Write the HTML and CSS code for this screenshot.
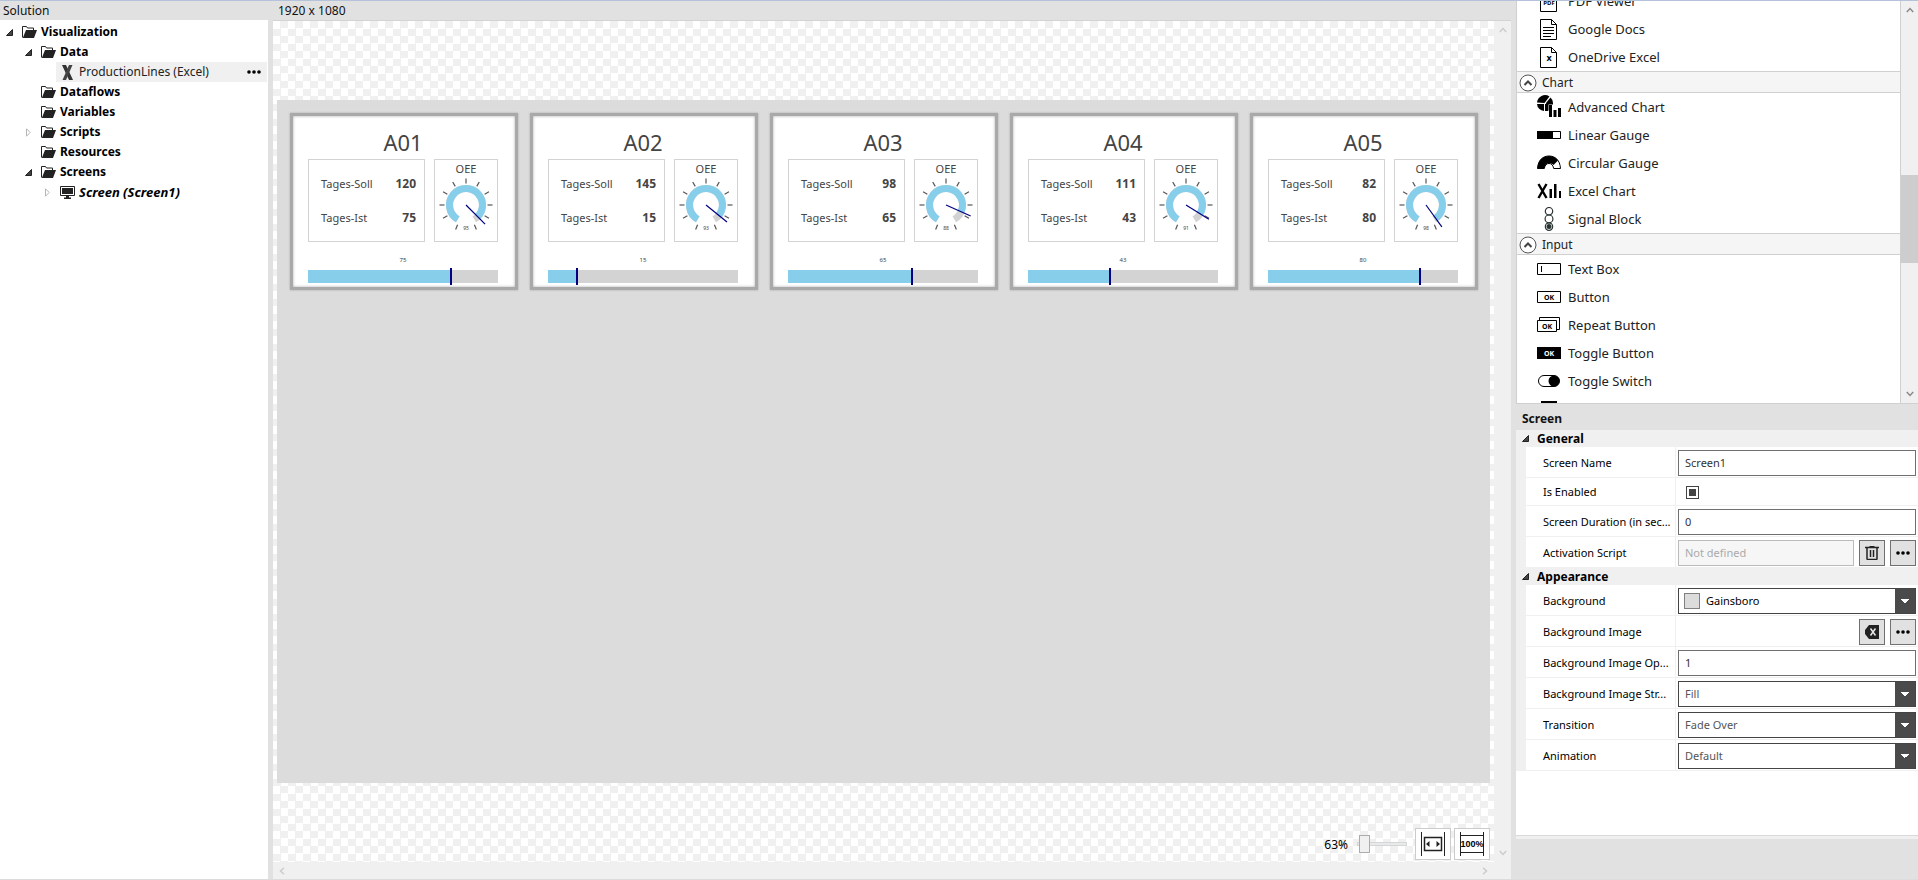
FILE: index.html
```html
<!DOCTYPE html>
<html lang="en">
<head>
<meta charset="utf-8">
<title>Visualization Designer</title>
<link rel="stylesheet" href="styles.css">
</head>
<body>
<svg class="defs" aria-hidden="true">
  <symbol id="folder" viewBox="0 0 15 13">
    <path d="M.5 11.500V.5h4l1 1.500h6V4" fill="none" stroke="#222"/>
    <path d="M4 4h11l-3 8H.8z" fill="#222"/>
  </symbol>
  <symbol id="open" viewBox="0 0 7 7"><path d="M6.500.5v6h-6z" fill="#444" stroke="#222"/></symbol>
  <symbol id="closed" viewBox="0 0 5 9"><path d="M.5.8v7.400l3.700-3.700z" fill="#fff" stroke="#b5b5b5"/></symbol>
  <symbol id="dots" viewBox="0 0 14 4"><circle cx="2" cy="2" r="1.800"/><circle cx="7" cy="2" r="1.800"/><circle cx="12" cy="2" r="1.800"/></symbol>
  <symbol id="up" viewBox="0 0 8 6"><path d="M.8 5L4 1.500 7.200 5" fill="none" stroke="currentColor" stroke-width="1.500"/></symbol>
  <symbol id="collapse" viewBox="0 0 18 18"><circle cx="9" cy="9" r="8" fill="#fff" stroke="#555"/><path d="M5.500 11L9 7.500l3.500 3.500" fill="none" stroke="#444" stroke-width="2"/></symbol>
  <symbol id="page" viewBox="0 0 17 21"><path d="M.5.5h11l5 5v15H.5zM11.500.5v5h5" fill="#fff" stroke="#000"/></symbol>
  <symbol id="dial" viewBox="-27 -27 54 56">
    <path d="M-8.250 14.290A16.500 16.500 0 1 1 8.250 14.290" fill="none" stroke="#d3d3d3" stroke-width="7"/>
    <g stroke="#555" stroke-width="1.200">
      <path id="t" d="M0-26.500v5"/>
      <use href="#t" transform="rotate(30)"/><use href="#t" transform="rotate(60)"/><use href="#t" transform="rotate(90)"/><use href="#t" transform="rotate(120)"/><use href="#t" transform="rotate(157)"/>
      <use href="#t" transform="rotate(-30)"/><use href="#t" transform="rotate(-60)"/><use href="#t" transform="rotate(-90)"/><use href="#t" transform="rotate(-120)"/><use href="#t" transform="rotate(-157)"/>
    </g>
  </symbol>
</svg>

<div class="app">
  <nav class="solution">
    <h2 class="bar">Solution</h2>
    <ul class="tree">
      <li class="node l0"><svg class="tw" width="7" height="7"><use href="#open"/></svg><svg width="15" height="13"><use href="#folder"/></svg><span>Visualization</span></li>
      <li class="node l1"><svg class="tw" width="7" height="7"><use href="#open"/></svg><svg width="15" height="13"><use href="#folder"/></svg><span>Data</span></li>
      <li class="node l2 selected"><span class="pick"><svg width="11" height="15" viewBox="0 0 11 15"><path d="M0 0h4l7 15H7z" fill="#333"/><path d="M10.500 0H7L.5 15H4z" fill="#444"/></svg><span>ProductionLines (Excel)</span><button class="more" type="button" aria-label="More"><svg width="14" height="4"><use href="#dots"/></svg></button></span></li>
      <li class="node l1"><i class="tw"></i><svg width="15" height="13"><use href="#folder"/></svg><span>Dataflows</span></li>
      <li class="node l1"><i class="tw"></i><svg width="15" height="13"><use href="#folder"/></svg><span>Variables</span></li>
      <li class="node l1"><svg class="tw" width="7" height="9"><use href="#closed"/></svg><svg width="15" height="13"><use href="#folder"/></svg><span>Scripts</span></li>
      <li class="node l1"><i class="tw"></i><svg width="15" height="13"><use href="#folder"/></svg><span>Resources</span></li>
      <li class="node l1"><svg class="tw" width="7" height="7"><use href="#open"/></svg><svg width="15" height="13"><use href="#folder"/></svg><span>Screens</span></li>
      <li class="node l2 screen"><svg class="tw" width="7" height="9"><use href="#closed"/></svg><svg width="15" height="13" viewBox="0 0 15 13"><path d="M.5.5h14v9H.5z" fill="#fff" stroke="#222"/><path d="M2 2h11v6H2zM6 10h3v1.500h2V13H4v-1.500h2z" fill="#222"/></svg><span>Screen (Screen1)</span></li>
    </ul>
  </nav>

  <main class="designer">
    <h2 class="bar">1920 x 1080</h2>
    <div class="viewport">
      <div class="stage">
        <section class="card">
          <h3>A01</h3>
          <div class="boxes">
            <dl class="box facts"><dt>Tages-Soll</dt><dd>120</dd><dt>Tages-Ist</dt><dd>75</dd></dl>
            <div class="box oee"><span>OEE</span><svg class="dial" viewBox="-27 -27 54 56"><use href="#dial" x="-27" y="-27" width="54" height="56"/><path class="arc" pathLength="100" stroke-dasharray="95 100" d="M-8.250 14.290A16.500 16.500 0 1 1 8.250 14.290"/><path class="needle" d="M0 0V-27" transform="rotate(135)"/><text y="25">95</text></svg></div>
          </div>
          <span class="value">75</span>
          <div class="gauge"><div class="fill" style="width:75%"></div></div>
        </section>
        <section class="card">
          <h3>A02</h3>
          <div class="boxes">
            <dl class="box facts"><dt>Tages-Soll</dt><dd>145</dd><dt>Tages-Ist</dt><dd>15</dd></dl>
            <div class="box oee"><span>OEE</span><svg class="dial" viewBox="-27 -27 54 56"><use href="#dial" x="-27" y="-27" width="54" height="56"/><path class="arc" pathLength="100" stroke-dasharray="93 100" d="M-8.250 14.290A16.500 16.500 0 1 1 8.250 14.290"/><path class="needle" d="M0 0V-27" transform="rotate(129)"/><text y="25">93</text></svg></div>
          </div>
          <span class="value">15</span>
          <div class="gauge"><div class="fill" style="width:15%"></div></div>
        </section>
        <section class="card">
          <h3>A03</h3>
          <div class="boxes">
            <dl class="box facts"><dt>Tages-Soll</dt><dd>98</dd><dt>Tages-Ist</dt><dd>65</dd></dl>
            <div class="box oee"><span>OEE</span><svg class="dial" viewBox="-27 -27 54 56"><use href="#dial" x="-27" y="-27" width="54" height="56"/><path class="arc" pathLength="100" stroke-dasharray="88 100" d="M-8.250 14.290A16.500 16.500 0 1 1 8.250 14.290"/><path class="needle" d="M0 0V-27" transform="rotate(114)"/><text y="25">88</text></svg></div>
          </div>
          <span class="value">65</span>
          <div class="gauge"><div class="fill" style="width:65%"></div></div>
        </section>
        <section class="card">
          <h3>A04</h3>
          <div class="boxes">
            <dl class="box facts"><dt>Tages-Soll</dt><dd>111</dd><dt>Tages-Ist</dt><dd>43</dd></dl>
            <div class="box oee"><span>OEE</span><svg class="dial" viewBox="-27 -27 54 56"><use href="#dial" x="-27" y="-27" width="54" height="56"/><path class="arc" pathLength="100" stroke-dasharray="91 100" d="M-8.250 14.290A16.500 16.500 0 1 1 8.250 14.290"/><path class="needle" d="M0 0V-27" transform="rotate(122)"/><text y="25">91</text></svg></div>
          </div>
          <span class="value">43</span>
          <div class="gauge"><div class="fill" style="width:43%"></div></div>
        </section>
        <section class="card">
          <h3>A05</h3>
          <div class="boxes">
            <dl class="box facts"><dt>Tages-Soll</dt><dd>82</dd><dt>Tages-Ist</dt><dd>80</dd></dl>
            <div class="box oee"><span>OEE</span><svg class="dial" viewBox="-27 -27 54 56"><use href="#dial" x="-27" y="-27" width="54" height="56"/><path class="arc" pathLength="100" stroke-dasharray="98 100" d="M-8.250 14.290A16.500 16.500 0 1 1 8.250 14.290"/><path class="needle" d="M0 0V-27" transform="rotate(144)"/><text y="25">98</text></svg></div>
          </div>
          <span class="value">80</span>
          <div class="gauge"><div class="fill" style="width:80%"></div></div>
        </section>
      </div>
      <div class="zoom">
        <label for="zoom">63%</label>
        <input id="zoom" type="range" min="0" max="100" value="3">
        <button type="button" aria-label="Fit to window"><svg width="26" height="26" viewBox="0 0 26 26"><path d="M1.500 1v24M24.500 1v24" stroke="#222"/><path d="M4.500 6.500h17v13h-17z" fill="none" stroke="#222" stroke-width="1.500"/><path d="M9.500 10v6l-3.500-3zM16.500 10v6l3.500-3z" fill="#222"/></svg></button>
        <button type="button" aria-label="Actual size"><svg width="26" height="26" viewBox="0 0 26 26"><path d="M1.500 1v24M24.500 1v24M1 4.500h24M1 21.500h24" stroke="#222"/><text class="pct" x="13" y="16">100%</text></svg></button>
      </div>
    </div>
    <div class="vscroll faint"><svg width="8" height="6"><use href="#up"/></svg><svg class="down" width="8" height="6"><use href="#up"/></svg></div>
    <div class="hscroll faint"><svg class="left" width="8" height="6"><use href="#up"/></svg><svg class="right" width="8" height="6"><use href="#up"/></svg></div>
  </main>

  <aside class="side">
    <div class="toolbox">
      <div class="tools">
        <div class="group first">
          <div class="tool"><svg width="24" height="24" viewBox="0 0 24 24"><use href="#page" x="3" y="2" width="17" height="21"/><text class="tiny" x="12" y="16">PDF</text></svg>PDF Viewer</div>
          <div class="tool"><svg width="24" height="24" viewBox="0 0 24 24"><use href="#page" x="3" y="2" width="17" height="21"/><path d="M6 10.500h11M6 13.500h11M6 16.500h11M6 19.500h8" stroke="#000"/></svg>Google Docs</div>
          <div class="tool"><svg width="24" height="24" viewBox="0 0 24 24"><use href="#page" x="3" y="2" width="17" height="21"/><text class="ex" x="12" y="16">x</text></svg>OneDrive Excel</div>
        </div>
        <button class="ghead" type="button"><svg width="18" height="18"><use href="#collapse"/></svg>Chart</button>
        <div class="group">
          <div class="tool"><svg width="24" height="24" viewBox="0 0 24 24"><path d="M7.500 8L12.500 1.500A8 8 0 0 0 0 7.500z"/><path d="M9 8l4.500-5.500A7.500 7.500 0 0 1 16 8v1.500h-4.500V15.500l-2 .3z"/><path d="M0 9h7v7A7.500 7.500 0 0 1 0 9z"/><path d="M8 9h3v7H8z"/><path d="M12 10h3v12h-3zM16.500 15h3v7h-3zM21 13h3v9h-3z"/></svg>Advanced Chart</div>
          <div class="tool"><svg width="24" height="24" viewBox="0 0 24 24"><path d="M.5 8.500h23v7H.5z" fill="#fff" stroke="#000"/><path d="M0 8h16v8H0z"/></svg>Linear Gauge</div>
          <div class="tool"><svg width="24" height="24" viewBox="0 0 24 24"><path d="M.5 17.500C1 9 6 5 12 5s11 4 11.500 12.500h-6.800C16 14 14.500 12.500 12 12.500S8 14 7.300 17.500z" fill="#fff" stroke="#000"/><path d="M.5 17.500C1 9 6 5 12 5c4 0 7 1.500 9 4.500l-4.500 4.500c-1-1.200-2.500-1.800-4.500-1.800-2.500 0-4 1.800-4.700 5.300z"/></svg>Circular Gauge</div>
          <div class="tool"><svg width="24" height="24" viewBox="0 0 24 24"><path d="M1.500 5l8 14M9.500 5l-8 14" stroke="#000" stroke-width="2.400"/><path d="M12.500 10h2.500v9h-2.500zM17 5h2.500v14H17zM22 12h2v7h-2z"/></svg>Excel Chart</div>
          <div class="tool"><svg width="24" height="24" viewBox="0 0 24 24"><g fill="none" stroke="#2a3435" stroke-width="1.200"><circle cx="12" cy="4.200" r="3.700"/><circle cx="12" cy="11.900" r="3.900"/><circle cx="12" cy="19.600" r="3.700"/></g><circle cx="12" cy="19.600" r="2.500" fill="#2a3435"/></svg>Signal Block</div>
        </div>
        <button class="ghead" type="button"><svg width="18" height="18"><use href="#collapse"/></svg>Input</button>
        <div class="group">
          <div class="tool"><svg width="24" height="24" viewBox="0 0 24 24"><path d="M.5 6.500h23v11H.5zM4.500 9v6" fill="#fff" stroke="#000"/></svg>Text Box</div>
          <div class="tool"><svg width="24" height="24" viewBox="0 0 24 24"><path d="M.5 6.500h23v11H.5z" fill="#fff" stroke="#000"/><text class="ok" x="12" y="15">OK</text></svg>Button</div>
          <div class="tool"><svg width="24" height="24" viewBox="0 0 24 24"><path d="M2.500 4.500h20v12h-20z" fill="#fff" stroke="#000"/><path d="M.5 7.500h19v11H.5z" fill="#fff" stroke="#000"/><text class="ok" x="10" y="16">OK</text></svg>Repeat Button</div>
          <div class="tool"><svg width="24" height="24" viewBox="0 0 24 24"><path d="M0 6h24v12H0z"/><text class="ok" x="12" y="15" fill="#fff">OK</text></svg>Toggle Button</div>
          <div class="tool"><svg width="24" height="24" viewBox="0 0 24 24"><rect x="1.500" y="6.500" width="21" height="11" rx="5.500" fill="#fff" stroke="#000"/><circle cx="17" cy="12" r="5.500"/></svg>Toggle Switch</div>
          <div class="tool"><svg width="24" height="24" viewBox="0 0 24 24"><path d="M4 4h16v16H4z"/></svg></div>
        </div>
      </div>
      <div class="vscroll tscroll"><svg width="8" height="6"><use href="#up"/></svg><div class="thumb"></div><svg class="down" width="8" height="6"><use href="#up"/></svg></div>
    </div>

    <h2 class="title">Screen</h2>
    <form class="props">
      <h3 class="section"><svg width="7" height="7"><use href="#open"/></svg>General</h3>
      <div class="rows">
        <div class="row"><label for="name">Screen Name</label><div class="field"><input id="name" type="text" value="Screen1"></div></div>
        <div class="row short"><label for="enabled">Is Enabled</label><div class="field"><input id="enabled" type="checkbox" checked></div></div>
        <div class="row"><label for="dur">Screen Duration (in sec...</label><div class="field"><input id="dur" type="text" value="0"></div></div>
        <div class="row"><label for="act">Activation Script</label><div class="field"><input id="act" type="text" value="Not defined" disabled><button type="button" aria-label="Delete script"><svg width="14" height="14" viewBox="0 0 14 14"><path d="M0 1.500h14M4.500.5h5M2 2v10.500q0 1 1 1h8q1 0 1-1V2M5.500 4v7M8.500 4v7" fill="none" stroke="#222" stroke-width="1.500"/></svg></button><button type="button" aria-label="Choose script"><svg width="14" height="4"><use href="#dots"/></svg></button></div></div>
      </div>
      <h3 class="section"><svg width="7" height="7"><use href="#open"/></svg>Appearance</h3>
      <div class="rows">
        <div class="row"><label for="bg">Background</label><div class="field swatched"><i class="swatch"></i><select id="bg"><option>Gainsboro</option></select></div></div>
        <div class="row"><label for="clear">Background Image</label><div class="field end"><button id="clear" type="button" aria-label="Clear image"><svg width="14" height="14" viewBox="0 0 14 14"><path d="M4 0h10v14H4L0 9V5z" fill="#222"/><path d="M5.500 3.500l5 7M10.500 3.500l-5 7" stroke="#e8e8e8" stroke-width="1.500"/></svg></button><button type="button" aria-label="Choose image"><svg width="14" height="4"><use href="#dots"/></svg></button></div></div>
        <div class="row"><label for="op">Background Image Op...</label><div class="field"><input id="op" type="text" value="1"></div></div>
        <div class="row"><label for="st">Background Image Str...</label><div class="field"><select id="st"><option>Fill</option></select></div></div>
        <div class="row"><label for="tr">Transition</label><div class="field"><select id="tr"><option>Fade Over</option></select></div></div>
        <div class="row"><label for="an">Animation</label><div class="field"><select id="an"><option>Default</option></select></div></div>
      </div>
    </form>
    <div class="foot"></div>
  </aside>
</div>
</body>
</html>
```
FILE: styles.css
```css
* { box-sizing: border-box; }
body {
  margin: 0;
  font: 12px/16px "Noto Sans", "Open Sans", sans-serif;
  color: #111;
}
h2, h3, ul, dl, dd { margin: 0; padding: 0; }
svg { flex: none; display: block; }
input, select, button { font: inherit; color: inherit; margin: 0; border-radius: 0; }
.defs { position: absolute; width: 0; height: 0; }

.app {
  display: grid;
  grid-template-columns: 268px minmax(0, 1fr) 402px;
  gap: 5px;
  height: 100vh;
  background: #e1e1e1;
  border-top: 1px solid #b4c3d9;
  border-bottom: 1px solid #dcdcdc;
}
.bar { height: 19px; padding: 2px 3px; font-size: 12px; font-weight: 400; }

/* Solution tree */
.solution { display: flex; flex-direction: column; }
.tree { flex: 1; list-style: none; background: #fff; padding: 2px 1px 0 0; }
.node { display: flex; align-items: center; gap: 4px; height: 20px; padding-left: 6px; font-weight: 700; color: #000; }
.node .tw { width: 7px; margin-right: 5px; }
.node.l1 { padding-left: 25px; }
.node.l2 { padding-left: 44px; }
.node.selected { padding-left: 56px; font-weight: 400; color: #222; }
.pick { flex: 1; display: flex; align-items: center; gap: 6px; height: 20px; padding: 0 6px; background: #f0f0f0; }
.more { margin-left: auto; padding: 0; border: 0; background: none; }
.node.screen { font-style: italic; font-size: 13px; }

/* Designer */
.designer {
  display: grid;
  grid-template-columns: minmax(0, 1fr) 17px;
  grid-template-rows: 19px minmax(0, 1fr) 17px;
}
.designer .bar { grid-column: 1 / -1; padding-left: 5px; }
.viewport {
  position: relative;
  display: flex;
  align-items: center;
  padding: 0 4px;
  border-top: 1px solid #d3d3d3;
  background: repeating-conic-gradient(#f0f0f0 0 25%, #fff 0 50%) 0 0 / 15px 15px;
}
.stage {
  flex: 1;
  aspect-ratio: 16 / 9;
  display: grid;
  grid-template-columns: repeat(5, minmax(0, 1fr));
  align-items: start;
  gap: 12px;
  padding: 13px 12px 0 13px;
  background: #dcdcdc;
}
.card {
  display: flex;
  flex-direction: column;
  padding: 12px 17px 4px 15px;
  border: 3px solid #a9a9a9;
  background: #fff;
  box-shadow: 0 0 2px #a9a9a9, inset 0 0 3px #a9a9a9;
  color: #444;
}
.card h3 { margin-bottom: 2px; font-size: 22px; line-height: 29px; font-weight: 400; text-align: center; }
.boxes { display: grid; grid-template-columns: minmax(0, 1fr) 64px; gap: 9px; }
.box { height: 83px; border: 1px solid #d3d3d3; }
.facts { display: grid; grid-template-columns: auto auto; justify-content: space-between; align-content: space-around; padding: 7px 8px 7px 12px; font-size: 11px; }
.facts dt { font-size: 11px; }
.facts dd { font-weight: 700; text-align: right; font-size: 12px; }
.oee { display: flex; flex-direction: column; align-items: center; padding-top: 1px; font-size: 11px; }
.dial { width: 54px; height: 56px; margin-top: 1px; }
.dial text { font-size: 5px; text-anchor: middle; fill: #444; }
.arc { fill: none; stroke: #87ceeb; stroke-width: 7; }
.needle { stroke: #000080; stroke-width: 1.2; }
.value { margin: 13px 0 5px; font-size: 6px; line-height: 10px; text-align: center; }
.gauge { height: 13px; background: #d3d3d3; }
.fill { position: relative; height: 13px; background: #87ceeb; }
.fill::after { content: ""; position: absolute; right: -1px; top: -2px; width: 2px; height: 17px; background: #000080; }

.zoom { position: absolute; right: 4px; bottom: 2px; display: flex; align-items: center; gap: 3px; color: #000; }
.zoom label { padding-top: 2px; }
.zoom input { appearance: none; width: 50px; height: 18px; margin: 0 5px 0 6px; background: none; }
.zoom input::-webkit-slider-runnable-track { height: 4px; background: #e7eaea; border: 1px solid #d6d6d6; }
.zoom input::-webkit-slider-thumb { appearance: none; width: 11px; height: 18px; margin-top: -8px; background: #f0f0f0; border: 1px solid #acacac; }
.zoom button { display: grid; place-items: center; width: 36px; height: 32px; padding: 0; border: 1px solid #ccc; background: #fff; }
.pct { font: 700 9px "Liberation Sans", sans-serif; text-anchor: middle; }

.vscroll, .hscroll { display: flex; align-items: center; justify-content: space-between; background: #f0f0f0; color: #8a8a8a; }
.vscroll { flex-direction: column; padding: 6px 0; }
.designer .vscroll { border-top: 1px solid #d3d3d3; }
.hscroll { grid-column: 1 / -1; padding: 0 22px 0 5px; }
.vscroll.faint, .hscroll.faint { color: #ccc; }
.down { transform: rotate(180deg); }
.left { transform: rotate(-90deg); }
.right { transform: rotate(90deg); }

/* Toolbox */
.side { display: flex; flex-direction: column; min-height: 0; }
.toolbox { display: flex; height: 403px; border: 1px solid #d0d0d0; border-width: 0 0 1px 1px; background: #fff; }
.tools { flex: 1; display: flex; flex-direction: column; overflow: hidden; font-size: 13px; color: #222; }
.group { flex: none; }
.first { margin-top: -14px; }
.tool { display: flex; align-items: center; gap: 7px; height: 28px; padding-left: 20px; }
.ghead { flex: none; display: flex; align-items: center; gap: 5px; height: 22px; padding: 1px 2px 0; border: 1px solid #d0d0d0; border-width: 1px 0; background: #f5f5f5; font-size: 12px; text-align: left; }
.tscroll { width: 18px; border-left: 1px solid #d0d0d0; }
.thumb { width: 17px; height: 88px; margin: 162px 0 auto; background: #cdcdcd; }
.tiny { font: 700 6px "Noto Sans", sans-serif; text-anchor: middle; }
.ok { font: 700 7px "Noto Sans", sans-serif; text-anchor: middle; }
.ex { font: 700 9px "Noto Sans", sans-serif; text-anchor: middle; }

/* Properties */
.title { height: 26px; padding: 7px 6px; font-size: 12px; }
.props { flex: 1; background: #fff; font-size: 12px; color: #000; }
.section { display: flex; align-items: center; gap: 8px; height: 17px; padding-left: 6px; background: #f0f0f0; font-size: 12px; }
.rows { border-left: 10px solid #f0f0f0; }
.row { display: grid; grid-template-columns: 150px minmax(0, 1fr); height: 31px; border-bottom: 1px solid #f0f0f0; font-size: 11px; }
.row.short { height: 28px; }
.row label { padding-left: 17px; border-right: 1px solid #f0f0f0; line-height: 31px; white-space: nowrap; }
.row.short label { line-height: 28px; }
.field { display: flex; align-items: center; gap: 5px; padding: 0 2px; }
.field input[type="text"], .field select { flex: 1; min-width: 0; height: 26px; padding: 0 6px; border: 1px solid #707070; background: #fff; }
.field input[type="text"] { color: #333; }
.field input[type="text"]:disabled { border-color: #bbb; background: #f6f6f6; color: #aaa; }
.field input[type="checkbox"] { appearance: none; width: 13px; height: 13px; margin-left: 8px; border: 1px solid #444; background: #444 content-box; padding: 2px; }
.field button { display: grid; place-items: center; width: 26px; height: 26px; padding: 0; border: 1px solid #707070; background: #e1e1e1; }
.field.end { justify-content: flex-end; }
.field select {
  appearance: none;
  border-color: #444;
  color: #555;
  background: conic-gradient(from -45deg at 50% 100%, #fff 0 25%, transparent 0) right 6px top 10px / 8px 4px no-repeat,
    linear-gradient(#4a4a4a, #4a4a4a) right / 20px 100% no-repeat, #fff;
}
.swatched { position: relative; }
.swatched .swatch { position: absolute; left: 8px; width: 16px; height: 16px; border: 1px solid #808080; background: #dcdcdc; }
.field.swatched select { padding-left: 27px; color: #000; }
.foot { height: 44px; border-top: 1px solid #d9d9d9; box-shadow: inset 0 3px #f0f0f0; }
```
